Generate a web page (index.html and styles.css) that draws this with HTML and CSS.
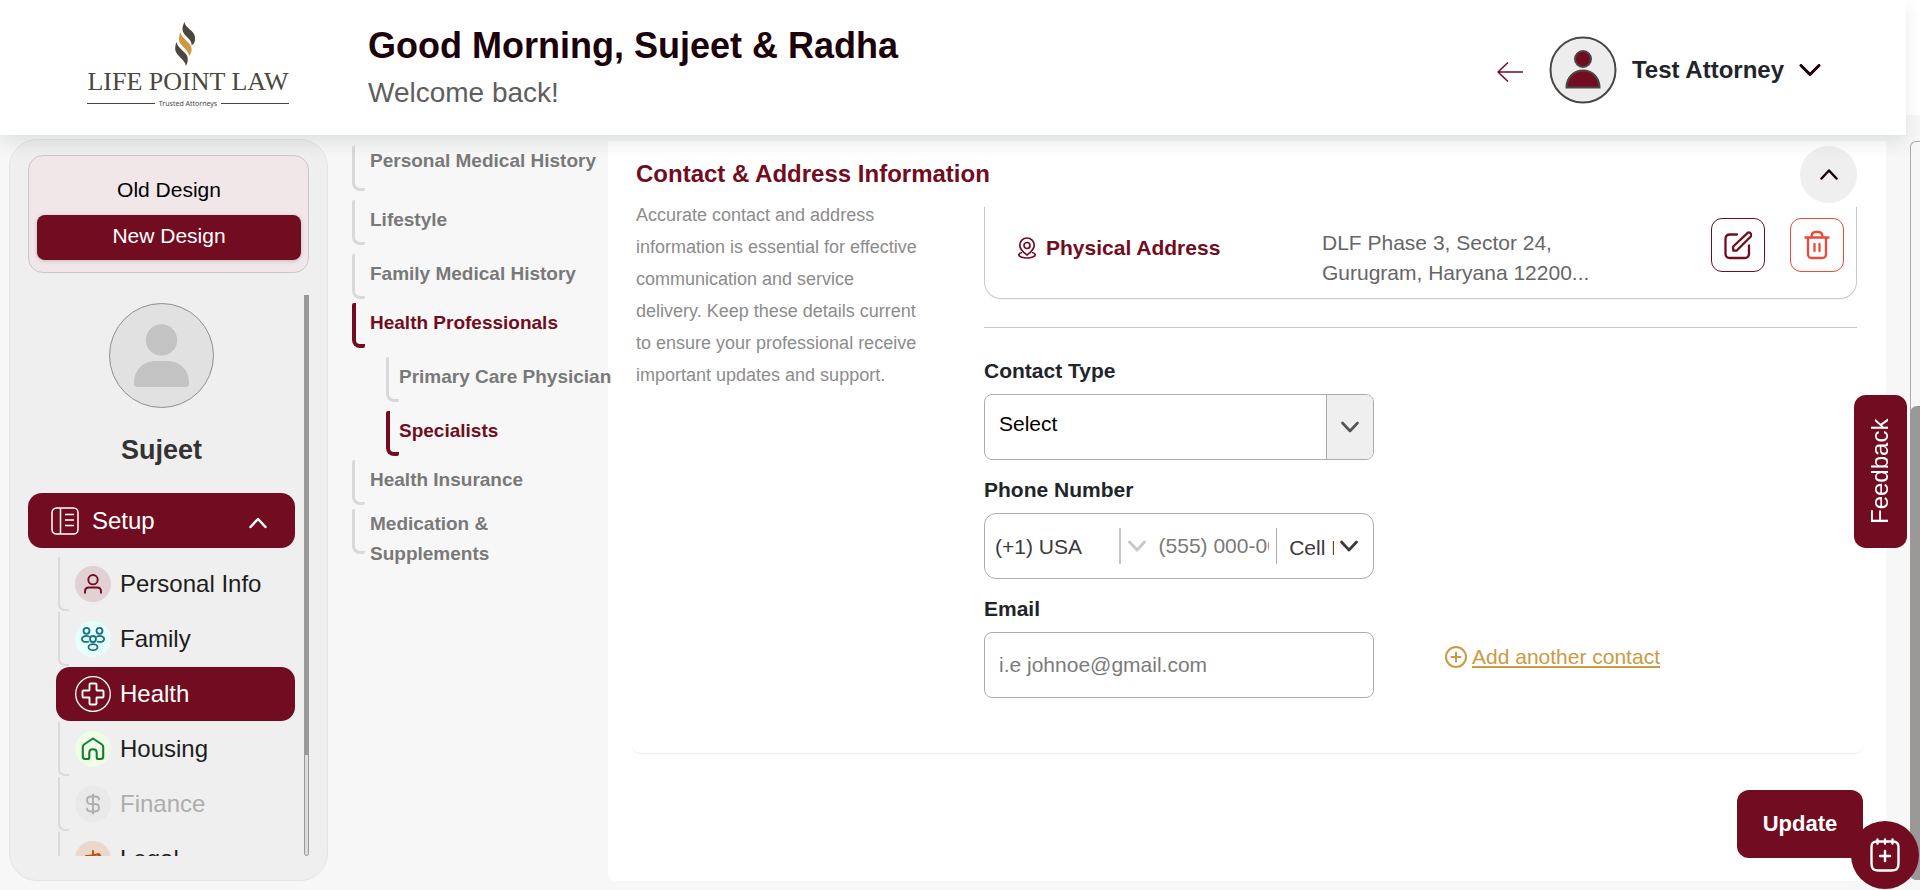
FILE: index.html
```
<!DOCTYPE html>
<html lang="en">
<head>
<meta charset="utf-8">
<title>Life Point Law</title>
<link rel="stylesheet" href="styles.css">
</head>
<body>
<div class="topbar">
  <header class="header">
    <a class="logo" href="#" aria-label="Life Point Law home">
      <svg class="logo-mark" viewBox="0 0 20 44" width="20" height="44" aria-hidden="true">
        <path fill="#4b473f" d="M9.500 0C10 6 19 8 20 15c.6 4-1 7-3.500 8.500C17.500 17 8 14 7.500 7.500 7.400 4.500 8.500 2 9.500 0z"/>
        <path fill="#cd9a44" d="M5.500 10C6 16 15.500 20 16.500 26c.6 3.500-.8 6-2.500 8C13.500 27 4.500 24 4 18c-.2-3.500.7-6 1.500-8z"/>
        <path fill="#4b473f" d="M1.500 20C3 27 11 29.500 12.500 35c.8 3.500-.4 6.500-1.500 9C10 37 1 34 .3 28 0 24.500.7 22 1.500 20z"/>
      </svg>
      <span class="logo-name">LIFE POINT LAW</span>
      <span class="logo-tag">Trusted Attorneys</span>
    </a>
    <div class="greeting">
      <h1>Good Morning, Sujeet &amp; Radha</h1>
      <p>Welcome back!</p>
    </div>
    <button class="icon-btn back" type="button" aria-label="Back">
      <svg viewBox="0 0 26 20" width="26" height="20" fill="none" stroke="#720c20" stroke-width="1.500"><path d="M26 10H1M11 .5 1 10l10 9.500"/></svg>
    </button>
    <button class="account" type="button">
      <svg viewBox="0 0 68 68" width="68" height="68" aria-hidden="true">
        <circle cx="34" cy="34" r="32.500" fill="#ededed" stroke="#4b4744" stroke-width="2"/>
        <circle cx="34" cy="23" r="8" fill="#720c20" stroke="#4b4744" stroke-width="2"/>
        <path d="M17.500 51.500c0-10 7.500-17 16.500-17s16.500 7 16.500 17z" fill="#720c20" stroke="#4b4744" stroke-width="2"/>
      </svg>
      <span>Test Attorney</span>
      <svg viewBox="0 0 22 12" width="22" height="12" fill="none" stroke="#1c0209" stroke-width="3" stroke-linecap="round" stroke-linejoin="round" aria-hidden="true"><path d="m2 1.500 9 9 9-9"/></svg>
    </button>
  </header>
</div>

<div class="layout">
  <aside class="sidebar">
    <div class="design-switch">
      <button type="button">Old Design</button>
      <button type="button" class="on">New Design</button>
    </div>
    <div class="side-scroll">
      <div class="side-content">
        <svg class="avatar" viewBox="0 0 105 105" width="105" height="105" aria-hidden="true">
          <circle cx="52.500" cy="52.500" r="52" fill="#e1e1e1" stroke="#8e8e8e"/>
          <circle cx="52.500" cy="37" r="15.700" fill="#c3c3c3"/>
          <path d="M25 80c0-13 9-22 22-22h11c13 0 22 9 22 22 0 3-1 4-4 4H29c-3 0-4-1-4-4z" fill="#c3c3c3"/>
        </svg>
        <h2>Sujeet</h2>
        <button class="setup" type="button" aria-expanded="true">
          <svg viewBox="0 0 28 28" width="28" height="28" fill="none" stroke="#fff" stroke-width="1.500" aria-hidden="true"><rect x="1" y="1" width="26" height="26" rx="4.500"/><path d="M9.500 1v26M14 7.500h9M14 13h9M14 18.500h9"/></svg>
          <span>Setup</span>
          <svg class="push" viewBox="0 0 18 12" width="18" height="12" fill="none" stroke="#fff" stroke-width="2.500" stroke-linecap="round" stroke-linejoin="round" aria-hidden="true"><path d="m1.500 10 7.500-8 7.500 8"/></svg>
        </button>
        <nav class="tree" aria-label="Setup">
          <a href="#"><svg viewBox="0 0 36 36" width="36" height="36" aria-hidden="true"><circle cx="18" cy="18" r="18" fill="#e1d0d4"/><g fill="none" stroke="#720c20" stroke-width="1.900" stroke-linecap="round"><circle cx="18" cy="13.700" r="4.700"/><path d="M10 26.800v-1.300c0-2.500 1.500-4 4-4h8c2.500 0 4 1.500 4 4v1.300"/></g></svg>Personal Info</a>
          <a href="#"><svg viewBox="0 0 36 36" width="36" height="36" aria-hidden="true"><circle cx="18" cy="18" r="18" fill="#e6fffd"/><g fill="none" stroke="#17727c" stroke-width="1.800"><circle cx="11.500" cy="9.800" r="3"/><circle cx="24.500" cy="9.800" r="3"/><circle cx="18" cy="18" r="3"/><ellipse cx="18" cy="26.200" rx="4.500" ry="3"/><path d="M14 15.500c-3.500-1.500-7.200.3-7.200 2.600s3 3.400 6.400 2.600M22 15.500c3.500-1.500 7.200.3 7.200 2.600s-3 3.400-6.400 2.600" stroke-linecap="round"/></g></svg>Family</a>
          <a href="#" class="current" aria-current="page"><svg viewBox="0 0 36 36" width="36" height="36" fill="none" stroke="#fff" stroke-width="1.300" aria-hidden="true"><circle cx="18" cy="18" r="17.300"/><path stroke-width="1.900" stroke-linejoin="round" d="M15.500 7.500h5q1 0 1 1v5.500a.5.500 0 0 0 .5.500h5.500q1 0 1 1v5q0 1-1 1H22a.5.500 0 0 0-.5.500v5.500q0 1-1 1h-5q-1 0-1-1V22a.5.500 0 0 0-.5-.5H8.500q-1 0-1-1v-5q0-1 1-1H14a.5.500 0 0 0 .5-.5V8.500q0-1 1-1z"/></svg>Health</a>
          <a href="#"><svg viewBox="0 0 36 36" width="36" height="36" aria-hidden="true"><circle cx="18" cy="18" r="18" fill="#effde6"/><path fill="none" stroke="#167c33" stroke-width="2.100" stroke-linejoin="round" d="M18 7.500 9 13.500c-1 .7-1.200 1.400-1.200 2.500v9.500c0 1.800.8 2.500 2.500 2.500h2.200c1.200 0 1.800-.6 1.800-1.800v-4.700c0-2 1.200-3.200 3.700-3.200s3.700 1.200 3.700 3.200v4.700c0 1.200.6 1.800 1.800 1.800h2.200c1.700 0 2.500-.7 2.500-2.500V16c0-1.100-.2-1.800-1.200-2.500z"/></svg>Housing</a>
          <a href="#" class="muted"><svg viewBox="0 0 36 36" width="36" height="36" aria-hidden="true"><circle cx="18" cy="18" r="18" fill="#e9e9e9"/><path fill="none" stroke="#aeaeae" stroke-width="1.900" stroke-linecap="round" d="M18 8.500v19M24 13.500c0-2-1.800-3-4-3h-4c-2.300 0-4 1.500-4 3.700s1.700 3.800 4 3.800h4c2.300 0 4 1.500 4 3.800s-1.700 3.700-4 3.700h-4c-2.200 0-4-1-4-3"/></svg>Finance</a>
          <a href="#"><svg viewBox="0 0 36 36" width="36" height="36" aria-hidden="true"><circle cx="18" cy="18" r="18" fill="#ebd8cd"/><path fill="none" stroke="#c1510f" stroke-width="2" stroke-linecap="round" stroke-linejoin="round" d="M18 10v17M11 15c5 0 8-1 13-2M12 27h12M12 15l-4 8h8zM24 13l-3 8h8z"/></svg>Legal</a>
        </nav>
      </div>
      <div class="side-bar" aria-hidden="true"><span></span></div>
    </div>
  </aside>

  <nav class="subnav" aria-label="Health sections">
    <a href="#" class="flush">Personal Medical History</a>
    <a href="#">Lifestyle</a>
    <a href="#">Family Medical History</a>
    <a href="#" class="current tight">Health Professionals</a>
    <a href="#" class="child">Primary Care Physician</a>
    <a href="#" class="child current">Specialists</a>
    <a href="#" class="tight">Health Insurance</a>
    <a href="#" class="flush tight">Medication &amp; Supplements</a>
  </nav>

  <main class="panel">
    <section class="section">
      <div class="intro">
        <h3>Contact &amp; Address Information</h3>
        <p>Accurate contact and address information is essential for effective communication and service delivery. Keep these details current to ensure your professional receive important updates and support.</p>
      </div>
      <div class="details">
        <button class="collapse" type="button" aria-label="Collapse section">
          <svg viewBox="0 0 18 12" width="18" height="12" fill="none" stroke="#1c0209" stroke-width="2.500" stroke-linecap="round" stroke-linejoin="round"><path d="m1.500 9.500 7.500-8 7.500 8"/></svg>
        </button>
        <div class="address">
          <div class="address-kind">
            <svg viewBox="0 0 18 22" width="18" height="22" fill="none" stroke="#720c20" stroke-width="1.700" aria-hidden="true"><circle cx="9" cy="8.500" r="3"/><path d="M9 18c-2-1.500-7.200-5-7.200-9.800a7.200 7.200 0 0 1 14.400 0C16.200 13 11 16.500 9 18z"/><path d="M4 15.500c-2 .4-3.200 1.200-3.200 2.200C.8 19.500 4.500 21 9 21s8.200-1.500 8.200-3.300c0-1-1.200-1.800-3.200-2.200"/></svg>
            <span>Physical Address</span>
          </div>
          <p>DLF Phase 3, Sector 24,<br>Gurugram, Haryana 12200...</p>
          <div class="actions">
            <button class="square" type="button" aria-label="Edit address">
              <svg viewBox="0 0 28 30" width="28" height="30" fill="none" stroke="#720c20" stroke-width="2.300" stroke-linecap="round" stroke-linejoin="round"><path d="M13 4.500H6c-3 0-4.500 1.500-4.500 4.500v14.500c0 3 1.500 4.500 4.500 4.500h14.500c3 0 4.500-1.500 4.500-4.500V15.500"/><path d="m9 17.500.3 3.200 3.500-.2L27 6.200c.6-.7.6-1.600 0-2.300l-1-1.100c-.7-.7-1.600-.7-2.300 0L9.700 16c-.5.500-.7.900-.7 1.500z"/></svg>
            </button>
            <button class="square danger" type="button" aria-label="Delete address">
              <svg viewBox="0 0 26 30" width="26" height="30" fill="none" stroke="#f04836" stroke-width="2.300" stroke-linecap="round" stroke-linejoin="round"><path d="M1.500 7.500h23M7.500 7c0-3.500 1.500-5 4-5h3c2.500 0 4 1.500 4 5M4 7.500V24c0 2.800 1.300 4 4 4h10c2.700 0 4-1.200 4-4V7.500M10.500 14v7M15.500 14v7"/></svg>
            </button>
          </div>
        </div>
        <hr>
        <form class="contact">
          <div class="fields">
            <label for="ctype">Contact Type</label>
            <div class="box">
              <select id="ctype" class="type-select"><option>Select</option></select>
              <span class="box-arrow"><svg viewBox="0 0 18 12" width="18" height="12" fill="none" stroke="#555" stroke-width="2.600" stroke-linecap="round" stroke-linejoin="round" aria-hidden="true"><path d="m1.500 2 7.500 8 7.500-8"/></svg></span>
            </div>
            <label for="phone">Phone Number</label>
            <div class="box phone">
              <select class="code" aria-label="Country code"><option>(+1) USA</option></select>
              <i class="bar thick"></i>
              <svg viewBox="0 0 18 12" width="18" height="12" fill="none" stroke="#c8c8c8" stroke-width="2.900" stroke-linecap="round" stroke-linejoin="round" aria-hidden="true"><path d="m1.500 2 7.500 8 7.500-8"/></svg>
              <input id="phone" type="tel" placeholder="(555) 000-0000">
              <i class="bar"></i>
              <select class="kind" aria-label="Phone kind"><option>Cell Phone</option></select>
              <svg viewBox="0 0 18 12" width="18" height="12" fill="none" stroke="#3a3a3a" stroke-width="2.700" stroke-linecap="round" stroke-linejoin="round" aria-hidden="true"><path d="m1.500 2 7.500 8 7.500-8"/></svg>
            </div>
            <label for="email">Email</label>
            <input id="email" class="box email" type="email" placeholder="i.e johnoe@gmail.com">
          </div>
          <a class="add" href="#"><svg viewBox="0 0 24 24" width="24" height="24" fill="none" stroke="#cd9a44" stroke-width="2" stroke-linecap="round" aria-hidden="true"><circle cx="12" cy="12" r="10"/><path d="M12 7.500v9M7.500 12h9"/></svg><span>Add another contact</span></a>
        </form>
      </div>
    </section>
    <button class="update" type="button">Update</button>
  </main>
</div>

<div class="page-bar" aria-hidden="true"><span></span></div>
<button class="feedback" type="button">Feedback</button>
<button class="fab" type="button" aria-label="Add event">
  <svg viewBox="0 0 30 34" width="30" height="34" fill="none" stroke="#fff" stroke-width="2.400" stroke-linecap="round" stroke-linejoin="round"><path d="M7 3.500C3 3.500 1.500 5 1.500 9v16c0 5.500 1.500 7.500 7 7.500h13c5.500 0 7-2 7-7.500V9c0-4-1.500-5.500-5.500-5.500zM7.500 1.500v4M15 1.500v4M22.500 1.500v4M15 13v10M10 18h10"/></svg>
</button>
</body>
</html>
```

FILE: styles.css
```
:root {
  --wine: #720c20;
  --line: #c8c8c8;
  --page: #f7f7f7;
}

*, ::before, ::after { box-sizing: border-box; }

body {
  margin: 0;
  height: 100vh;
  display: flex;
  flex-direction: column;
  background: var(--page);
  font-family: "Liberation Sans", Arial, sans-serif;
  font-size: 21px;
  color: #212529;
  overflow: hidden;
}

h1, h2, h3, p { margin: 0; }
button, input, select { font: inherit; color: inherit; }
button { border: 0; background: none; padding: 0; cursor: pointer; }
a { color: inherit; text-decoration: none; }
svg { flex: none; display: block; }

/* Header */
.topbar {
  height: 115px;
  flex: none;
  background: #fff;
  position: relative;
  z-index: 2;
}

.header {
  height: 135px;
  margin-right: 14px;
  padding: 0 85px 0 87px;
  display: flex;
  align-items: flex-start;
  background: #fff;
  box-shadow: 0 8px 16px rgba(33, 45, 55, 0.1);
}

.logo {
  width: 202px;
  padding-top: 22px;
  display: flex;
  flex-direction: column;
  align-items: center;
  color: #4b473f;
}

.logo-mark { margin-right: 6px; }

.logo-name {
  font-family: "Liberation Serif", "Times New Roman", serif;
  font-size: 26px;
  line-height: 32px;
  white-space: nowrap;
}

.logo-tag {
  align-self: stretch;
  display: flex;
  align-items: center;
  gap: 4px;
  font-family: "Noto Sans", sans-serif;
  font-size: 7px;
  line-height: 11px;
  white-space: nowrap;
}

.logo-tag::before,
.logo-tag::after {
  content: "";
  flex: 1;
  height: 1px;
  background: #4b473f;
}

.greeting { margin-left: 79px; padding-top: 25px; }
.greeting h1 { font-size: 36px; line-height: 42px; color: #1c0209; }
.greeting p { margin-top: 9px; font-size: 28px; line-height: 34px; color: #5e5e5e; }

.back { margin-left: auto; padding-top: 62px; }

.account {
  margin-left: 26px;
  padding-top: 36px;
  display: flex;
  align-items: center;
  gap: 15px;
  font-size: 24px;
  font-weight: bold;
}

/* Layout columns */
.layout {
  flex: 1;
  min-height: 0;
  padding: 24px 34px 9px 9px;
  display: flex;
}

.sidebar {
  flex: none;
  width: 319px;
  padding: 15px 18px 24px;
  display: flex;
  flex-direction: column;
  background: #efefef;
  border: 1px solid #e4e4e4;
  border-radius: 28px;
}

.design-switch {
  flex: none;
  padding: 9px 7px 12px 8px;
  display: flex;
  flex-direction: column;
  border: 1px solid var(--line);
  border-radius: 15px;
  background: #f1e7e8;
  color: #000;
}

.design-switch button { height: 50px; }

.design-switch .on {
  height: 45px;
  padding-bottom: 3px;
  border-radius: 8px;
  background: var(--wine);
  color: #fff;
  box-shadow: 0 1px 4px rgba(0, 0, 0, 0.2);
}

.side-scroll {
  flex: 1;
  min-height: 0;
  margin-top: 22px;
  display: flex;
  gap: 9px;
}

.side-content {
  flex: 1;
  padding-top: 8px;
  display: flex;
  flex-direction: column;
  align-items: stretch;
  overflow: hidden;
}

.avatar { align-self: center; }

.side-content h2 {
  margin: 25px 0 26px;
  flex: none;
  text-align: center;
  font-size: 27px;
  line-height: 34px;
  color: #333;
}

.side-bar {
  width: 5px;
  border: 1px solid #9b9898;
  border-radius: 3px;
  background: #dcdcdc;
  display: flex;
}

.side-bar span { width: 100%; height: 82%; background: #9b9898; box-shadow: 0 0 0 1px #9b9898; }

.setup {
  flex: none;
  height: 55px;
  padding: 0 28px 0 23px;
  display: flex;
  align-items: center;
  gap: 13px;
  border-radius: 14px;
  background: var(--wine);
  color: #fff;
  font-size: 24px;
}

.push { margin: 4px 0 0 auto; }

.tree {
  flex: none;
  margin: 9px 0 0 28px;
  display: flex;
  flex-direction: column;
  gap: 1px;
  font-size: 24px;
}

.tree a {
  flex: none;
  height: 54px;
  padding-left: 19px;
  display: flex;
  align-items: center;
  gap: 9px;
  position: relative;
  color: #1d1d1d;
}

.tree a::before {
  content: "";
  position: absolute;
  left: 2px;
  top: 0;
  width: 11px;
  height: 54px;
  border: solid #dadada;
  border-width: 0 0 2px 2px;
  border-radius: 0 0 0 7px;
}

.tree .current { border-radius: 14px; background: var(--wine); color: #fff; }
.tree .current::before { display: none; }
.tree a.muted { color: #adadad; }

/* Section list */
.subnav {
  flex: none;
  width: 280px;
  padding: 7px 0 0 24px;
  display: flex;
  flex-direction: column;
  font-size: 19px;
  font-weight: bold;
  line-height: 30px;
  color: #797979;
  position: relative;
  z-index: 1;
}

.subnav a {
  flex: none;
  min-height: 45px;
  margin-bottom: 9px;
  padding: 5px 20px 0 18px;
  position: relative;
}

.subnav a:first-child,
.subnav .child { white-space: nowrap; padding-right: 0; }
.subnav a.flush { padding-top: 0; }
.subnav a.tight { margin-top: -5px; }
.subnav a.child { margin-left: 34px; padding-left: 13px; }
.subnav a.current { color: var(--wine); }

.subnav a::before {
  content: "";
  position: absolute;
  left: 0;
  top: 0;
  width: 13px;
  height: 45px;
  border: solid #d9d9d9;
  border-width: 0 0 3px 3px;
  border-radius: 2px 2px 2px 8px;
}

.subnav a.current::before { border-color: var(--wine); border-width: 0 0 4px 4px; }

/* Main panel */
.panel {
  flex: 1;
  min-width: 0;
  margin-top: 2px;
  padding: 0 23px 0 24px;
  display: flex;
  flex-direction: column;
  align-items: flex-end;
  background: #fff;
  border-radius: 0 0 0 8px;
}

.section {
  align-self: stretch;
  padding: 0 6px 55px 3px;
  display: flex;
  border-bottom: 1px solid #ececec;
  border-radius: 0 0 8px 8px;
}

.intro { flex: none; width: 349px; padding: 18px 0 0 1px; }

.intro h3 {
  font-size: 24px;
  line-height: 30px;
  color: var(--wine);
  white-space: nowrap;
}

.intro p {
  width: 285px;
  margin-top: 10px;
  font-size: 18px;
  line-height: 32px;
  color: #8c8c8c;
}

.details { flex: 1; min-width: 0; padding-top: 5px; }

.collapse {
  width: 57px;
  height: 57px;
  margin-left: auto;
  display: flex;
  align-items: center;
  justify-content: center;
  border-radius: 50%;
  background: #efefef;
}

.address {
  height: 92px;
  margin-top: 4px;
  padding: 11px 12px 0 33px;
  display: flex;
  align-items: flex-start;
  border: 1px solid var(--line);
  border-top: 0;
  border-radius: 0 0 17px 17px;
  box-shadow: 0 1px 1px rgba(0, 0, 0, 0.04);
}

.address-kind {
  flex: 0 0 304px;
  padding-top: 17px;
  display: flex;
  align-items: center;
  gap: 10px;
  font-weight: bold;
  line-height: 26px;
  color: var(--wine);
}

.address p { padding-top: 10px; line-height: 30px; color: #666; }

.actions { margin-left: auto; display: flex; gap: 25px; }

.square {
  width: 54px;
  height: 54px;
  display: flex;
  align-items: center;
  justify-content: center;
  border: 1px solid var(--wine);
  border-radius: 11px;
}

.danger { border-color: #f04836; }

hr { margin: 28px 0; border: 0; border-top: 1px solid var(--line); }

.contact { display: flex; gap: 70px; }

.fields { width: 390px; display: flex; flex-direction: column; }

.fields label {
  margin: 15px 0 8px;
  font-weight: bold;
  line-height: 30px;
}

.fields label:first-child { margin-top: 0; }

.box {
  height: 66px;
  display: flex;
  align-items: center;
  border: 1px solid #acacac;
  border-radius: 8px;
  background: #fff;
  overflow: hidden;
}

.box select,
.box input {
  border: 0;
  outline: 0;
  background: none;
  appearance: none;
  min-width: 0;
}

.type-select { flex: 1; align-self: stretch; padding: 0 0 8px 14px; color: #000; }

.box-arrow {
  width: 47px;
  align-self: stretch;
  display: flex;
  align-items: center;
  justify-content: center;
  border-left: 1px solid #acacac;
  background: #efefef;
}

.box.phone { border-radius: 12px; padding: 0 15px 0 10px; color: #3a3a3a; }
.box .code { width: 124px; padding: 0; }
.box #phone { width: 111px; margin: 0 7px 0 13px; padding: 0; }
.box .kind { width: 45px; margin: 3px 6px 0 12px; padding: 0; }

.bar { width: 1px; height: 36px; flex: none; background: #acacac; }
.bar.thick { width: 2px; margin-right: 7px; background: var(--line); }

::placeholder { color: #7b7b7b; opacity: 1; }

.email { padding: 0 14px; }

.add {
  align-self: flex-end;
  margin-bottom: 29px;
  display: flex;
  align-items: center;
  gap: 4px;
  color: #cd9a44;
}

.add span { text-decoration: underline; }

.update {
  flex: none;
  width: 126px;
  height: 68px;
  margin-top: 36px;
  border-radius: 12px;
  background: var(--wine);
  color: #fff;
  font-size: 22px;
  font-weight: bold;
}

/* Floating pieces */
.page-bar {
  position: fixed;
  top: 141px;
  right: 0;
  bottom: 10px;
  width: 10px;
  display: flex;
  align-items: flex-end;
  border: 1px solid #acacac;
  border-right: 0;
  border-radius: 6px 0 0 6px;
}

.page-bar span {
  width: 100%;
  height: 64%;
  border-radius: 6px 0 0 6px;
  background: #9b9898;
  box-shadow: 0 0 0 1px #9b9898;
}

.feedback {
  position: fixed;
  right: 13px;
  top: 395px;
  width: 53px;
  height: 153px;
  writing-mode: vertical-rl;
  transform: rotate(180deg);
  border-radius: 12px;
  background: var(--wine);
  color: #fff;
  font-size: 24px;
  z-index: 2;
}

.fab {
  position: fixed;
  right: 1px;
  bottom: 1px;
  width: 68px;
  height: 68px;
  display: flex;
  align-items: center;
  justify-content: center;
  border-radius: 50%;
  background: var(--wine);
  z-index: 2;
}
```
